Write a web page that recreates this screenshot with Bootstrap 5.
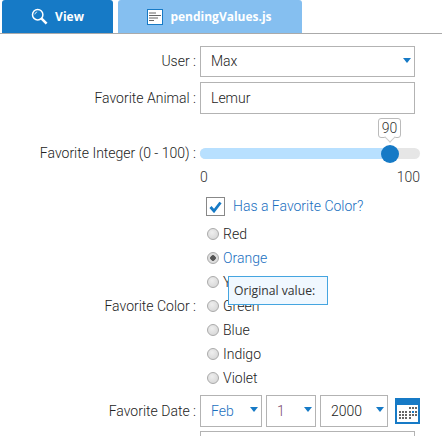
<!DOCTYPE html>
<html lang="en">
<head>
<meta charset="utf-8">
<title>pendingValues.js</title>
<link href="https://cdn.jsdelivr.net/npm/bootstrap@5.3.0/dist/css/bootstrap.min.css" rel="stylesheet">
<style>
html,body{height:436px;overflow:hidden}
body{font-family:Roboto,"Liberation Sans",sans-serif;font-size:14px;font-weight:300;color:#333;background:#fff}
.tabbar{height:34px;border-bottom:1px solid #aaa;padding-left:2px;gap:5px}
.tabitem{height:33px;color:#fff;font-family:"Open Sans","Liberation Sans",sans-serif;font-size:12px;font-weight:700;border-radius:3px 3px 0 0;gap:7px;justify-content:center}
.tab-view{width:111px;background:#167ac6}
.tab-file{width:184px;background:#85bff0;padding-right:1px}
.formarea{padding-top:12px;width:442px}
.rowline{gap:4px}
.rowlabel{width:196px;text-align:right;flex:none;color:#222}
.user-row{height:31px;margin-bottom:5px}
.animal-row{height:32px}
.ctl{width:215px;height:100%;border:1px solid #b3b3b3;border-radius:0;padding:0 10px;font-size:14px;font-weight:300;color:#222;font-family:inherit;background-color:#fff;box-shadow:none}
.form-select.ctl,.form-select.dsel{background-image:none;appearance:none}
.selwrap{position:relative;height:100%}
.selwrap::after{content:"";position:absolute;right:4.5px;top:12px;border-left:4.5px solid transparent;border-right:4.5px solid transparent;border-top:5px solid #167ac6;pointer-events:none}
.slider-row{height:23px;margin-top:28px}
.track{position:relative;width:220px;height:11px;border-radius:6px;background:#e6e6e6}
.fill{height:100%;border-radius:6px 0 0 6px;background:#b8e0ff}
.knob{position:absolute;left:181px;top:-3px;width:18px;height:18px;border-radius:50%;background:#167ac6}
.bubble{position:absolute;left:178px;top:-30px;width:23px;height:20px;border:1px solid #bbb;border-radius:3px;background:#fff;text-align:center;line-height:18px;font-size:14px}
.bubble::after{content:"";position:absolute;left:6.500px;top:14px;width:8px;height:8px;background:#fff;border-right:1px solid #ccc;border-bottom:1px solid #ccc;transform:rotate(45deg)}
.scale-row{width:220px;margin-left:200px;margin-top:2px;height:20px;line-height:20px}
.checkline{margin-left:206px;margin-top:10px;height:19px;gap:8px;color:#1a6fc0}
.tick{width:19px;height:19px;border:1px solid #888;display:flex;align-items:center;justify-content:center;background:#fff}
.color-row{position:relative;margin-top:6px}
.radios{width:200px;padding-left:11px}
.radline{height:24px;gap:4px;color:#222}
.radline.sel{color:#1a6fc0}
.dot{width:12px;height:12px;flex:none;border-radius:50%;border:1px solid #aaa;background:radial-gradient(circle at 40% 35%,#eee,#d2d2d2)}
.radline.sel .dot{background:radial-gradient(circle,#555 0 2.5px,#ddd 3px)}
.tipbox{position:absolute;left:228px;top:54px;width:100px;height:29px;border:1px solid #45a5e0;background:#f0f8ff;padding-left:5px;line-height:27px;font-size:12.2px;font-weight:400;color:#333;font-family:"Open Sans","Liberation Sans",sans-serif;white-space:nowrap}
.date-row{height:32px;margin-top:5px}
.dategroup{gap:4px;height:32px;align-items:center}
.dsel{height:32px;border:1px solid #b3b3b3;border-radius:0;padding:0 0 0 10px;font-size:14px;font-weight:300;color:#222;font-family:inherit;background-color:#fff;box-shadow:none}
.dw1{width:62px;color:#1a6fc0}.dw2{width:50px;color:#7a4a6a}.dw3{width:68px}
.calbtn{margin-left:3px;flex:none}
.nextbox{margin-left:200px;width:215px;height:20px;margin-top:4px;border:1px solid #b3b3b3}
</style>
</head>
<body>
<div class="d-flex tabbar">
  <div class="d-flex align-items-center tabitem tab-view">
    <svg width="17" height="17" viewBox="0 0 17 17" fill="none"><circle cx="6.7" cy="6.7" r="5.2" stroke="#fff" stroke-width="1.5"/><path d="M3.8 6.4a3 3 0 0 1 2.4-2.5" stroke="#fff" stroke-width=".8"/><path d="M10.6 10.6l5 5" stroke="#fff" stroke-width="2.6"/></svg>
    <span>View</span>
  </div>
  <div class="d-flex align-items-center tabitem tab-file">
    <svg width="16" height="16" viewBox="0 0 16 16"><rect x=".5" y=".5" width="15" height="15" fill="#fff" stroke="#167ac6"/><path d="M2 4h7M2 6.500h12M2 9h9M2 11.500h5" stroke="#666" stroke-width="1"/></svg>
    <span>pendingValues.js</span>
  </div>
</div>
<form class="formarea">
  <div class="d-flex align-items-center rowline user-row">
    <label class="rowlabel">User :</label>
    <div class="selwrap"><select class="form-select ctl"><option>Max</option></select></div>
  </div>
  <div class="d-flex align-items-center rowline animal-row">
    <label class="rowlabel">Favorite Animal :</label>
    <input class="form-control ctl" value="Lemur">
  </div>
  <div class="d-flex align-items-center rowline slider-row">
    <label class="rowlabel">Favorite Integer (0 - 100) :</label>
    <div class="track">
      <div class="fill" style="width:86%"></div>
      <div class="knob"></div>
      <div class="bubble">90</div>
    </div>
  </div>
  <div class="d-flex justify-content-between scale-row"><span>0</span><span>100</span></div>
  <div class="d-flex align-items-center checkline">
    <span class="tick"><svg width="13" height="12" viewBox="0 0 13 12" fill="none"><path d="M1.500 6l3.500 4 6.500-8.500" stroke="#167ac6" stroke-width="2.800"/></svg></span>
    <span>Has a Favorite Color?</span>
  </div>
  <div class="d-flex align-items-center color-row">
    <label class="rowlabel">Favorite Color :</label>
    <div class="radios">
      <div class="d-flex align-items-center radline"><span class="dot"></span>Red</div>
      <div class="d-flex align-items-center radline sel"><span class="dot"></span>Orange</div>
      <div class="d-flex align-items-center radline"><span class="dot"></span>Yellow</div>
      <div class="d-flex align-items-center radline"><span class="dot"></span>Green</div>
      <div class="d-flex align-items-center radline"><span class="dot"></span>Blue</div>
      <div class="d-flex align-items-center radline"><span class="dot"></span>Indigo</div>
      <div class="d-flex align-items-center radline"><span class="dot"></span>Violet</div>
    </div>
    <div class="tipbox">Original value:</div>
  </div>
  <div class="d-flex align-items-center rowline date-row">
    <label class="rowlabel">Favorite Date :</label>
    <div class="d-flex dategroup">
      <div class="selwrap"><select class="form-select dsel dw1"><option>Feb</option></select></div>
      <div class="selwrap"><select class="form-select dsel dw2"><option>1</option></select></div>
      <div class="selwrap"><select class="form-select dsel dw3"><option>2000</option></select></div>
      <svg class="calbtn" width="25" height="26" viewBox="0 0 25 26"><rect width="25" height="26" fill="#167ac6"/><rect x="2" y="7" width="21" height="17" fill="#fff"/><g fill="#666"><path d="M14 9h2v2h-2zM17 9h2v2h-2zM20 9h2v2h-2zM4 13h2v2H4zM7 13h2v2H7zM10 13h2v2h-2zM14 13h2v2h-2zM20 13h2v2h-2zM4 16h2v2H4zM7 16h2v2H7zM10 16h2v2h-2zM14 16h2v2h-2zM17 16h2v2h-2zM20 16h2v2h-2zM4 19h2v2H4zM7 19h2v2H7zM10 19h2v2h-2zM14 19h2v2h-2z"/></g><path d="M17 13h2v2h-2z" fill="#167ac6"/></svg>
    </div>
  </div>
  <div class="nextbox"></div>
</form>
<script src="https://cdn.jsdelivr.net/npm/bootstrap@5.3.0/dist/js/bootstrap.bundle.min.js"></script>
</body>
</html>
